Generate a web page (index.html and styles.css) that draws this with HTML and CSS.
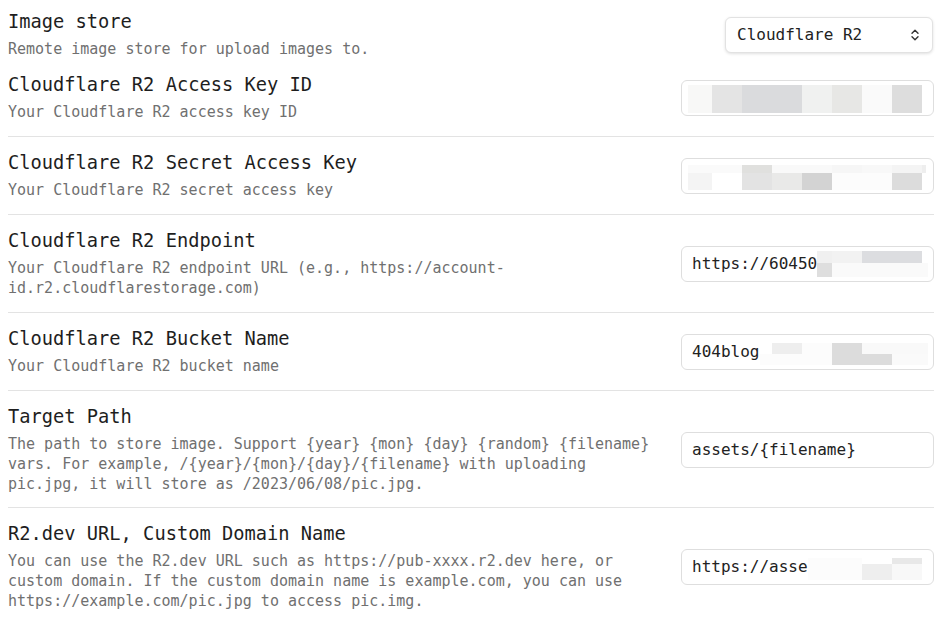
FILE: index.html
```html
<!DOCTYPE html>
<html lang="en">
<head>
<meta charset="utf-8">
<title>Image store settings</title>
<link rel="stylesheet" href="styles.css">
</head>
<body>
<div class="settings">
  <div class="row row-first">
    <div class="info">
      <div class="name">Image store</div>
      <div class="desc">Remote image store for upload images to.</div>
    </div>
    <div class="control">
      <div class="select">
        <span class="select-value">Cloudflare R2</span>
        <svg class="chev" width="8" height="12" viewBox="0 0 8 12" fill="none" stroke="#333" stroke-width="1.4" stroke-linecap="round" stroke-linejoin="round"><path d="M1 4.2 L4 1.2 L7 4.2"/><path d="M1 7.8 L4 10.8 L7 7.8"/></svg>
      </div>
    </div>
  </div>

  <div class="row row-plain">
    <div class="info">
      <div class="name">Cloudflare R2 Access Key ID</div>
      <div class="desc">Your Cloudflare R2 access key ID</div>
    </div>
    <div class="control">
      <div class="field"><input class="input" type="text" value=""><span class="mosaic m-key"></span></div>
    </div>
  </div>

  <div class="row">
    <div class="info">
      <div class="name">Cloudflare R2 Secret Access Key</div>
      <div class="desc">Your Cloudflare R2 secret access key</div>
    </div>
    <div class="control">
      <div class="field"><input class="input" type="text" value=""><span class="mosaic m-secret"></span></div>
    </div>
  </div>

  <div class="row">
    <div class="info">
      <div class="name">Cloudflare R2 Endpoint</div>
      <div class="desc">Your Cloudflare R2 endpoint URL (e.g., https://account-id.r2.cloudflarestorage.com)</div>
    </div>
    <div class="control">
      <div class="field"><input class="input" type="text" value="https://60450"><span class="mosaic m-endpoint"></span></div>
    </div>
  </div>

  <div class="row">
    <div class="info">
      <div class="name">Cloudflare R2 Bucket Name</div>
      <div class="desc">Your Cloudflare R2 bucket name</div>
    </div>
    <div class="control">
      <div class="field"><input class="input" type="text" value="404blog"><span class="mosaic m-bucket"></span></div>
    </div>
  </div>

  <div class="row">
    <div class="info">
      <div class="name">Target Path</div>
      <div class="desc">The path to store image. Support {year} {mon} {day} {random} {filename} vars. For example, /{year}/{mon}/{day}/{filename} with uploading pic.jpg, it will store as /2023/06/08/pic.jpg.</div>
    </div>
    <div class="control">
      <div class="field"><input class="input" type="text" value="assets/{filename}"></div>
    </div>
  </div>

  <div class="row row-last">
    <div class="info">
      <div class="name">R2.dev URL, Custom Domain Name</div>
      <div class="desc">You can use the R2.dev URL such as https://pub-xxxx.r2.dev here, or custom domain. If the custom domain name is example.com, you can use https://example.com/pic.jpg to access pic.img.</div>
    </div>
    <div class="control">
      <div class="field"><input class="input" type="text" value="https://asse"><span class="mosaic m-r2"></span></div>
    </div>
  </div>
</div>
</body>
</html>
```

FILE: styles.css
```css
html, body {
  margin: 0;
  padding: 0;
  background: #ffffff;
}

body {
  font-family: "DejaVu Sans Mono", "Liberation Mono", monospace;
  color: #1e1e1e;
}

.settings {
  padding: 9px 17px 0 8px;
}

.row {
  display: flex;
  align-items: center;
  gap: 20px;
  border-top: 1px solid #e3e3e3;
  padding: 14px 0;
}

.row-first {
  border-top: none;
  padding: 1px 0 0 0;
}

.row-plain {
  border-top: none;
  padding-top: 14px;
}

.row-last {
  margin-top: -1px;
}

.info {
  flex: 1 1 auto;
  min-width: 0;
  display: flex;
  flex-direction: column;
  gap: 5px;
}

.name {
  font-size: 18.72px;
  line-height: 24px;
  color: #1e1e1e;
}

.desc {
  font-size: 15px;
  line-height: 20px;
  color: #707070;
}

.control {
  flex: 0 0 253px;
  display: flex;
  justify-content: flex-end;
}

.select {
  box-sizing: border-box;
  width: 208px;
  height: 36px;
  display: flex;
  align-items: center;
  justify-content: space-between;
  padding: 0 13px 0 11px;
  border: 1px solid #e2e2e2;
  border-radius: 6px;
  box-shadow: 0 1px 3px rgba(0, 0, 0, 0.12);
  background: #ffffff;
  font-size: 16px;
  color: #222222;
  margin-right: 1px;
}

.chev {
  display: block;
}

.field {
  position: relative;
  width: 253px;
  height: 36px;
}

.input {
  box-sizing: border-box;
  width: 100%;
  height: 36px;
  margin: 0;
  padding: 0 10px;
  border: 1px solid #dedede;
  border-radius: 6px;
  background: #ffffff;
  font-family: "DejaVu Sans Mono", "Liberation Mono", monospace;
  font-size: 16px;
  color: #222222;
  outline: none;
}

.mosaic {
  position: absolute;
  display: block;
  pointer-events: none;
}

.m-key {
  left: 7px;
  top: 5px;
  width: 234px;
  height: 28px;
  background: linear-gradient(to right,
    #f8f8f7 0 24px, #e4e4e4 24px 54px, #dadbdd 54px 114px,
    #f0f1f0 114px 144px, #e7e7e5 144px 174px, #fafafa 174px 204px,
    #dddddd 204px 234px);
}

.m-secret {
  left: 7px;
  top: 7px;
  width: 238px;
  height: 25px;
  background:
    linear-gradient(to right,
      #fafafa 0 54px, #e0e0de 54px 84px, #f9f9f9 84px 144px,
      #f6f6f6 144px 174px, #f8f8f8 174px 204px, #f4f4f4 204px 234px,
      #eeeeee 234px 238px) top left / 100% 8px no-repeat,
    linear-gradient(to right,
      #f4f4f4 0 24px, #ffffff 24px 54px, #e3e3e3 54px 84px,
      #e9e9e8 84px 114px, #d3d3d3 114px 144px, #fcfcfc 144px 204px,
      #dcdcdc 204px 234px, transparent 234px 238px) bottom left / 100% 17px no-repeat;
}

.m-endpoint {
  left: 136px;
  top: 5px;
  width: 111px;
  height: 26px;
  background:
    linear-gradient(to right,
      #f0f0f0 0 15px, #f2f2f2 15px 45px, #dcdde0 45px 105px,
      transparent 105px 111px) top left / 100% 12px no-repeat,
    linear-gradient(to right,
      #dedede 0 15px, #fafafa 15px 111px) bottom left / 100% 14px no-repeat;
}

.m-bucket {
  left: 79px;
  top: 9px;
  width: 168px;
  height: 22px;
  background:
    linear-gradient(to right,
      transparent 0 12px, #eeeeee 12px 42px, #fcfcfc 42px 72px,
      #dcdcdc 72px 102px, #f9f9f9 102px 168px) top left / 100% 11px no-repeat,
    linear-gradient(to right,
      #fcfcfc 0 72px, #dcdcdc 72px 132px, #fafafa 132px 168px) bottom left / 100% 11px no-repeat;
}

.m-r2 {
  left: 127px;
  top: 9px;
  width: 114px;
  height: 22px;
  background:
    linear-gradient(to right,
      #fcfcfc 0 54px, transparent 54px 84px, #e8e8e8 84px 114px) top left / 100% 6px no-repeat,
    linear-gradient(to right,
      #fcfcfc 0 54px, #eeeeee 54px 84px, #f8f8f8 84px 114px) bottom left / 100% 16px no-repeat;
}
```
